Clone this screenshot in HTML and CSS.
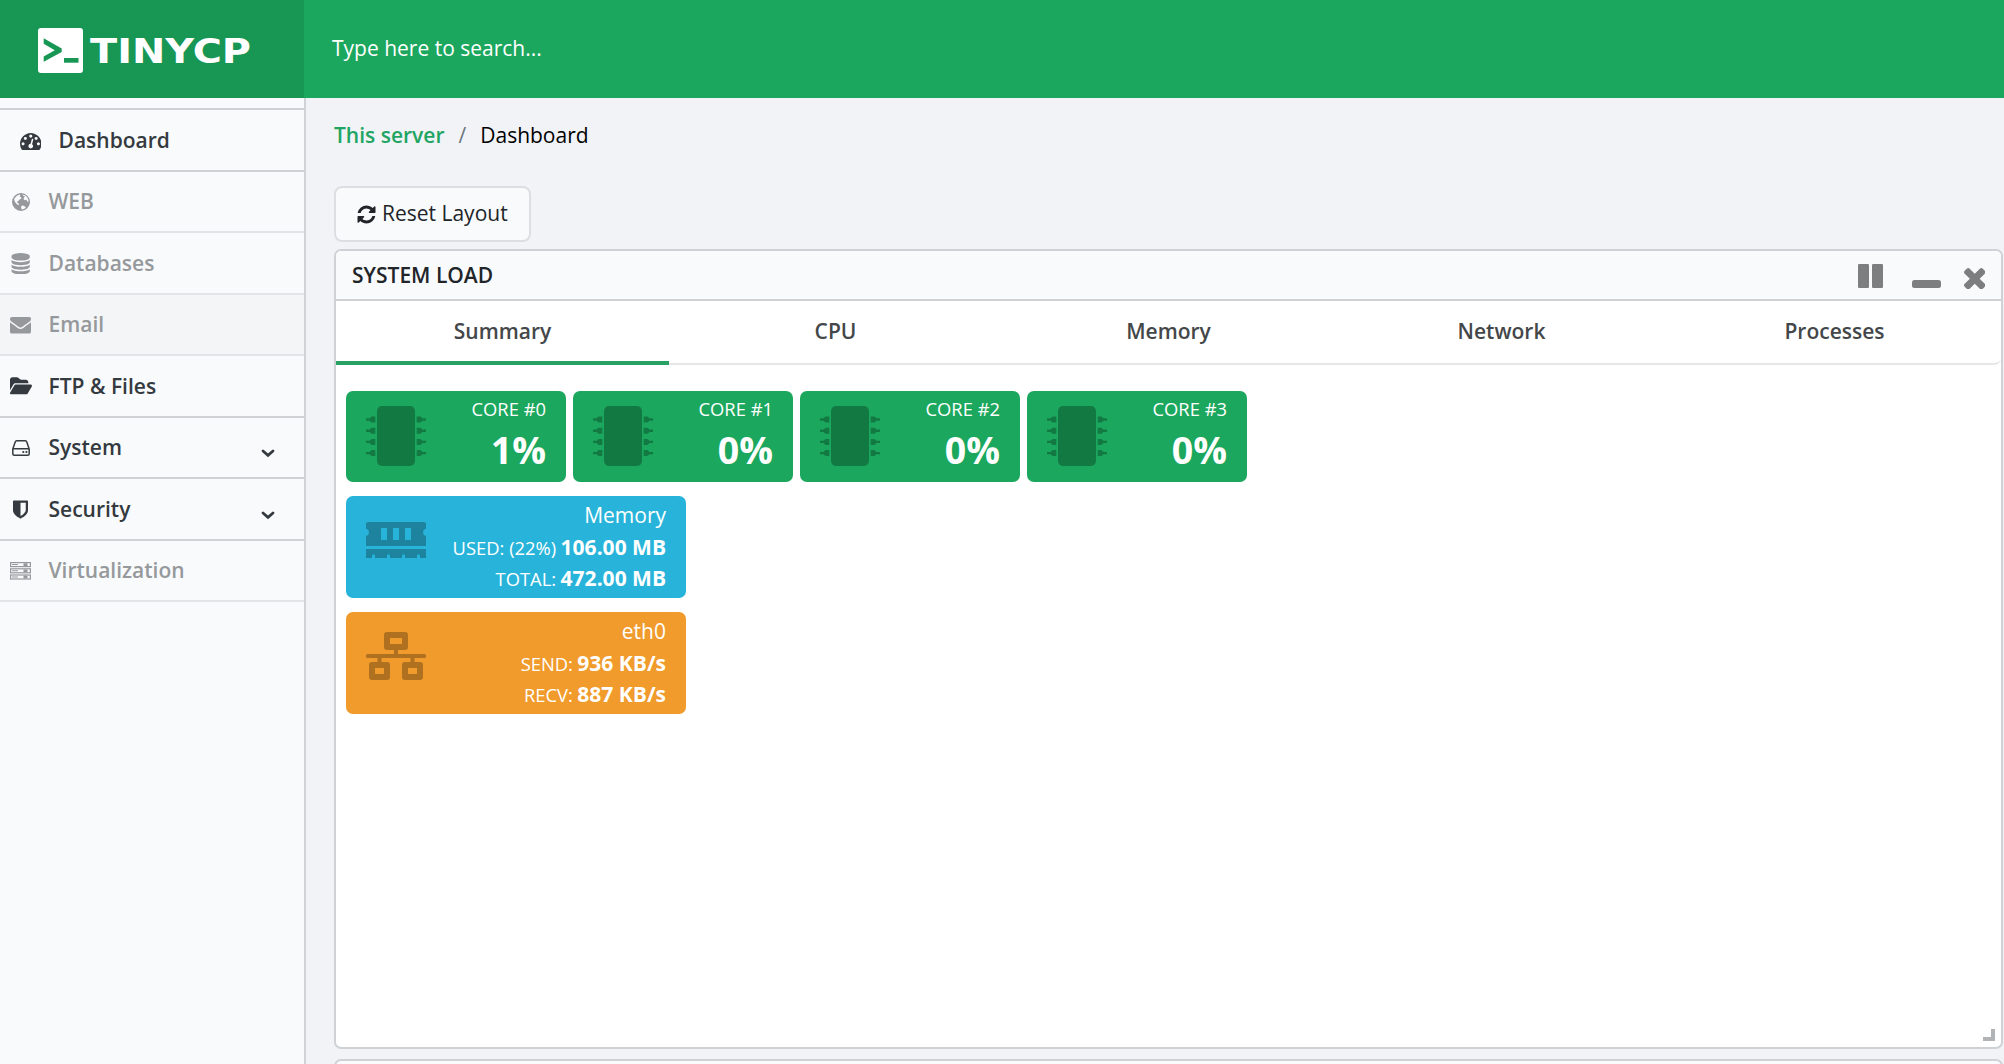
FILE: index.html
```html
<!DOCTYPE html>
<html lang="en">
<head>
<meta charset="utf-8">
<title>TinyCP - Dashboard</title>
<link rel="stylesheet" href="styles.css">
</head>
<body>
<svg class="defs" width="0" height="0" aria-hidden="true">
  <symbol id="chip" viewBox="0 0 60 60">
    <rect x="11" width="38" height="60" rx="5"/>
    <g id="pins-left">
      <path id="pin" d="M9.300 10.500v6H5.500L3.500 14.700H0v-2.400h3.500L5.500 10.500z"/>
      <use href="#pin" y="11.200"/><use href="#pin" y="22.400"/><use href="#pin" y="33.600"/>
    </g>
    <use href="#pins-left" transform="matrix(-1 0 0 1 60 0)"/>
  </symbol>
</svg>

<header class="topbar">
  <div class="brand">
    <svg width="214" height="46" viewBox="0 0 214 46">
      <rect width="45" height="45" rx="3" fill="#fff"/>
      <path d="M5.700 10.300L23.700 20.600v3.400L5.700 33.700v-5.200L16.800 22.200 5.700 15.800z" fill="#179654"/>
      <rect x="26" y="30" width="14.500" height="4.700" fill="#179654"/>
      <text class="wordmark" x="52" y="34.600" textLength="161" lengthAdjust="spacingAndGlyphs">TINYCP</text>
    </svg>
  </div>
  <div class="search">Type here to search...</div>
</header>

<div class="layout">
  <nav class="sidebar">
    <a class="item current">
      <span class="icon"><svg width="21.500" height="21.500" viewBox="0 0 1792 1792"><path d="M384 1152q0-53-37.500-90.500t-90.500-37.500-90.500 37.500-37.500 90.500 37.500 90.500 90.500 37.500 90.500-37.500 37.500-90.500zm192-448q0-53-37.500-90.500t-90.500-37.500-90.500 37.500-37.500 90.500 37.500 90.500 90.500 37.500 90.500-37.500 37.500-90.500zm428 481l101-382q6-26-7.500-48.500t-38.500-29.500-48 6.500-30 39.500l-101 382q-60 5-107 43.500t-63 98.500q-20 77 20 146t117 89 146-20 89-117q16-60-6-117t-72-91zm660-33q0-53-37.500-90.500t-90.500-37.500-90.500 37.500-37.500 90.500 37.500 90.500 90.500 37.500 90.500-37.500 37.500-90.500zm-640-640q0-53-37.500-90.500t-90.500-37.500-90.500 37.500-37.500 90.500 37.500 90.500 90.500 37.500 90.500-37.500 37.500-90.500zm448 192q0-53-37.500-90.500t-90.500-37.500-90.500 37.500-37.500 90.500 37.500 90.500 90.500 37.500 90.500-37.500 37.500-90.500zm320 448q0 261-141 483-19 29-54 29h-1402q-35 0-54-29-141-221-141-483 0-182 71-348t191-286 286-191 348-71 348 71 286 191 191 286 71 348z"/></svg></span>
      <span class="label">Dashboard</span>
    </a>
    <a class="item off">
      <span class="icon"><svg width="18" height="18" viewBox="0 0 18 18"><path fill-rule="evenodd" d="M9 0a9 9 0 1 0 0 18A9 9 0 0 0 9 0zM4.600 3L7.400 1.500l1 .8-.8 1.400 1.500.3.300 1.500-1.800.9-1 1.400-1.400.8.3 1.300 1.300.7.200 1.500-1.500-.3-1.700-1.800L2.500 8 2.200 5.700zM10.300 1.400l3 1 1.900 1.800 1.200 2.500-.1 2.500-1-.7-.9-1.700-1.500.4-1.300-1 .3-1.800 1.200-.9-1.600-.6zM9.300 12.900l1.700-.4 2 .9.800 1-1.700 1.500-2.200.7-.8-1.600z"/></svg></span>
      <span class="label">WEB</span>
    </a>
    <a class="item off">
      <span class="icon"><svg width="21.300" height="21.300" viewBox="0 0 1792 1792"><path d="M896 768q237 0 443-43t325-127v170q0 69-103 128t-280 93.500-385 34.500-385-34.500-280-93.500-103-128v-170q119 84 325 127t443 43zm0 768q237 0 443-43t325-127v170q0 69-103 128t-280 93.500-385 34.500-385-34.500-280-93.500-103-128v-170q119 84 325 127t443 43zm0-384q237 0 443-43t325-127v170q0 69-103 128t-280 93.500-385 34.500-385-34.500-280-93.500-103-128v-170q119 84 325 127t443 43zm0-1152q208 0 385 34.500t280 93.500 103 128v128q0 69-103 128t-280 93.500-385 34.500-385-34.500-280-93.500-103-128v-128q0-69 103-128t280-93.500 385-34.500z"/></svg></span>
      <span class="label">Databases</span>
    </a>
    <a class="item off hovered">
      <span class="icon"><svg width="21" height="21" viewBox="0 0 1792 1792"><path d="M1792 710v794q0 66-47 113t-113 47h-1472q-66 0-113-47t-47-113v-794q44 49 101 87 362 246 497 345 57 42 92.500 65.500t94.500 48 110 24.500h2q51 0 110-24.500t94.500-48 92.500-65.500q170-123 498-345 57-39 100-87zm0-294q0 79-49 151t-122 123q-376 261-468 325-10 7-42.500 31t-54 38.500-52 32.500-57.500 27-50 9h-2q-23 0-50-9t-57.500-27-52-32.500-54-38.500-42.500-31q-91-64-262-182.500t-205-142.500q-62-42-117-115.500t-55-136.500q0-78 41.500-130t118.500-52h1472q65 0 112.500 47t47.500 113z"/></svg></span>
      <span class="label">Email</span>
    </a>
    <a class="item">
      <span class="icon"><svg width="22" height="19.600" viewBox="0 0 576 512"><path d="M88.700 223.800L0 375.800V96C0 60.700 28.700 32 64 32H181.500c17 0 33.300 6.700 45.300 18.700l26.500 26.500c12 12 28.300 18.700 45.300 18.700H416c35.300 0 64 28.700 64 64v32H144c-22.800 0-43.800 12.100-55.300 31.800zm27.600 16.100C122.100 230 132.600 224 144 224H544c11.500 0 22 6.100 27.700 16.100s5.700 22.200-.1 32.100l-112 192C453.900 474 443.400 480 432 480H32c-11.500 0-22-6.100-27.700-16.100s-5.700-22.200 .1-32.100l112-192z"/></svg></span>
      <span class="label">FTP &amp; Files</span>
    </a>
    <a class="item">
      <span class="icon"><svg width="18" height="16" viewBox="0 0 18 16"><path d="M.8 9L3.200 2Q3.600.8 4.700.8h8.600q1.100 0 1.500 1.200L17.200 9v4.700q0 1.500-1.500 1.500H2.300Q.8 15.200.8 13.700zM1 8.800h16" fill="none" stroke="currentColor" stroke-width="1.500"/><circle cx="11.300" cy="12" r="1.100"/><circle cx="14.400" cy="12" r="1.100"/></svg></span>
      <span class="label">System</span>
      <svg class="caret" width="14" height="9" viewBox="0 0 14 9"><path d="M2 2l5 4.300L12 2" fill="none" stroke="currentColor" stroke-width="2.800" stroke-linecap="round"/></svg>
    </a>
    <a class="item">
      <span class="icon"><svg width="21" height="21" viewBox="0 0 1792 1792"><path d="M1344 960v-640h-448v1137q119-63 213-137 235-184 235-360zm192-768v768q0 86-33.500 170.500t-83 150-118 127.500-126.500 103-121 77.500-89.500 49.500-42.500 20q-12 6-26 6t-26-6q-16-7-42.500-20t-89.500-49.500-121-77.500-126.500-103-118-127.500-83-150-33.500-170.500v-768q0-26 19-45t45-19h1152q26 0 45 19t19 45z"/></svg></span>
      <span class="label">Security</span>
      <svg class="caret" width="14" height="9" viewBox="0 0 14 9"><path d="M2 2l5 4.300L12 2" fill="none" stroke="currentColor" stroke-width="2.800" stroke-linecap="round"/></svg>
    </a>
    <a class="item off">
      <span class="icon"><svg width="21" height="18" viewBox="0 0 21 18"><g id="unit"><rect x=".6" y=".6" width="19.800" height="4" fill="none" stroke="currentColor" stroke-width="1.200"/><path d="M2 2.100h6v1H2zM13.500 1.200h4v2.800h-4z"/></g><use href="#unit" y="6.200"/><use href="#unit" y="12.400"/></svg></span>
      <span class="label">Virtualization</span>
    </a>
  </nav>

  <main class="content">
    <div class="breadcrumb"><a>This server</a><i>/</i><span>Dashboard</span></div>
    <button class="reset"><svg width="21" height="21" viewBox="0 0 1792 1792"><path d="M1639 1056q0 5-1 7-64 268-268 434.500t-478 166.500q-146 0-282.500-55t-243.500-157l-129 129q-19 19-45 19t-45-19-19-45v-448q0-26 19-45t45-19h448q26 0 45 19t19 45-19 45l-137 137q71 66 161 102t187 36q134 0 250-65t186-179q11-17 53-117 8-23 30-23h192q13 0 22.500 9.500t9.500 22.500zm25-800v448q0 26-19 45t-45 19h-448q-26 0-45-19t-19-45 19-45l138-138q-148-137-349-137-134 0-250 65t-186 179q-11 17-53 117-8 23-30 23h-199q-13 0-22.500-9.500t-9.500-22.500v-7q65-268 270-434.500t480-166.500q146 0 284 55.500t245 156.500l130-129q19-19 45-19t45 19 19 45z"/></svg>Reset Layout</button>

    <section class="panel">
      <div class="panel-head">
        <h2>SYSTEM LOAD</h2>
        <div class="tools">
          <svg width="25" height="24" viewBox="0 0 25 24"><rect width="11" height="24" rx="1.200"/><rect x="14" width="11" height="24" rx="1.200"/></svg>
          <svg width="29" height="8" viewBox="0 0 29 8"><rect width="29" height="8" rx="2.500"/></svg>
          <svg width="21.500" height="21.500" viewBox="302 366 1188 1188"><path d="M1490 1322q0 40-28 68l-136 136q-28 28-68 28t-68-28l-294-294-294 294q-28 28-68 28t-68-28l-136-136q-28-28-28-68t28-68l294-294-294-294q-28-28-28-68t28-68l136-136q28-28 68-28t68 28l294 294 294-294q28-28 68-28t68 28l136 136q28 28 28 68t-28 68l-294 294 294 294q28 28 28 68z"/></svg>
        </div>
      </div>
      <div class="tabs">
        <a class="active">Summary</a><a>CPU</a><a>Memory</a><a>Network</a><a>Processes</a>
      </div>
      <div class="cards">
        <div class="row">
          <div class="card core"><svg width="60" height="60"><use href="#chip"/></svg><div class="info"><small>CORE #0</small><strong>1%</strong></div></div>
          <div class="card core"><svg width="60" height="60"><use href="#chip"/></svg><div class="info"><small>CORE #1</small><strong>0%</strong></div></div>
          <div class="card core"><svg width="60" height="60"><use href="#chip"/></svg><div class="info"><small>CORE #2</small><strong>0%</strong></div></div>
          <div class="card core"><svg width="60" height="60"><use href="#chip"/></svg><div class="info"><small>CORE #3</small><strong>0%</strong></div></div>
        </div>
        <div class="card wide memory">
          <svg width="60" height="36" viewBox="0 0 60 36"><path fill-rule="evenodd" d="M2 0h56q2 0 2 2v4.500q-3 1.200-3 3.800t3 3.800V24H0v-9.900q3-1.200 3-3.800T0 6.500V2Q0 0 2 0zM15 6v12h6V6zM27 6v12h6V6zM39 6v12h6V6zM0 27h60v9h-6v-2.300a1.500 1.500 0 0 0-3 0V36H39v-2.300a1.500 1.500 0 0 0-3 0V36H24v-2.300a1.500 1.500 0 0 0-3 0V36H9v-2.300a1.500 1.500 0 0 0-3 0V36H0z"/></svg>
          <div class="info"><div>Memory</div><div><small>USED: (22%)</small> <b>106.00 MB</b></div><div><small>TOTAL:</small> <b>472.00 MB</b></div></div>
        </div>
        <div class="card wide network">
          <svg width="60" height="48" viewBox="0 0 60 48"><path fill-rule="evenodd" d="M21 0h18q3 0 3 3v12q0 3-3 3h-7v4h26.500q1.500 0 1.500 1.500v1q0 1.500-1.500 1.500H48.500v4H54q3 0 3 3v12q0 3-3 3H39q-3 0-3-3V33q0-3 3-3h5.500v-4h-29v4H21q3 0 3 3v12q0 3-3 3H6q-3 0-3-3V33q0-3 3-3h5.500v-4h-10Q0 26 0 24.500v-1Q0 22 1.500 22H28v-4h-7q-3 0-3-3V3q0-3 3-3zM24 6v6h12V6zM9 36v6h9v-6zM42 36v6h9v-6z"/></svg>
          <div class="info"><div>eth0</div><div><small>SEND:</small> <b>936 KB/s</b></div><div><small>RECV:</small> <b>887 KB/s</b></div></div>
        </div>
      </div>
      <span class="grip"></span>
    </section>
    <section class="panel next"></section>
  </main>
</div>
</body>
</html>
```
FILE: styles.css
```css
* { box-sizing: border-box; }

body {
  margin: 0;
  height: 1064px;
  overflow: hidden;
  display: flex;
  flex-direction: column;
  font: 21px/1.5 "Open Sans", "Noto Sans", sans-serif;
  color: #212529;
  background: #f1f3f7;
}

svg { display: block; flex: none; fill: currentColor; }
.defs { position: absolute; }

/* Top bar */
.topbar { flex: none; display: flex; height: 98px; background: #1ba75d; color: #fff; }
.brand { width: 304px; padding: 28px 0 0 38px; background: #179654; }
.wordmark { font: 700 34px "DejaVu Sans", sans-serif; fill: #fff; }
.search { padding: 33px 0 0 28px; }

.layout { flex: 1; min-height: 0; display: flex; }

/* Sidebar */
.sidebar {
  flex: none;
  width: 306px;
  padding-top: 10px;
  background: #f9fafc;
  border-right: 2px solid #cfd2d6;
}
.item {
  display: flex;
  align-items: center;
  height: 61.5px;
  padding-left: 8px;
  border-bottom: 2px solid #cfd2d5;
  font-weight: 600;
  color: #343a3f;
}
.item.current { height: 63.5px; padding-left: 18px; border-top: 2px solid #cfd2d5; }
.item.off { color: #96999b; border-bottom-color: #e2e5e8; }
.item.hovered { background: #f4f5f7; }
.icon { display: flex; justify-content: center; width: 25px; margin-right: 15.5px; padding-top: 1px; }
.label { padding-top: 1.5px; }
.caret { margin: 13px 29px 0 auto; }

/* Content */
.content {
  flex: 1;
  min-width: 0;
  display: flex;
  flex-direction: column;
  align-items: flex-start;
  padding: 22px 1px 0 28px;
}
.breadcrumb { display: flex; gap: 14px; color: #000; }
.breadcrumb a { font-weight: 600; color: #22a562; }
.breadcrumb i { font-style: normal; color: #6c757d; }
.reset {
  flex: none;
  display: flex;
  align-items: center;
  gap: 5px;
  height: 56px;
  margin-top: 34.500px;
  padding: 0 21px 0 20px;
  border: 2px solid #dcdee2;
  border-radius: 8px;
  background: #f9fafc;
  font: inherit;
  color: #212529;
}

/* Panels */
.panel {
  position: relative;
  flex: none;
  display: flex;
  flex-direction: column;
  width: 100%;
  height: 800px;
  margin-top: 7px;
  border: 2px solid #cfd2d5;
  border-radius: 7px;
  background: #fff;
}
.panel.next { margin-top: 10px; height: 60px; background: #f9fafc; }
.panel-head {
  display: flex;
  justify-content: space-between;
  height: 50px;
  padding: 8px 16px 0 16px;
  border-bottom: 2px solid #cfd2d5;
  border-radius: 5px 5px 0 0;
  background: #f9fafc;
}
.panel-head h2 { margin: 1px 0 0; font-size: 21px; font-weight: 600; }
.tools { display: flex; align-items: flex-end; height: 29px; color: #7c7e80; }
.tools svg:nth-child(2) { margin: 0 23px 0 29px; }
.tools svg:nth-child(3) { margin-bottom: -1px; }

.tabs {
  display: grid;
  grid-template-columns: repeat(5, 1fr);
  height: 64px;
  border-bottom: 2px solid #e6e7e9;
  border-radius: 0 0 7px 0;
}
.tabs a {
  height: 64px;
  padding-top: 15px;
  text-align: center;
  font-weight: 600;
  color: #444749;
}
.tabs .active { border-bottom: 4px solid #28a263; }

/* Cards */
.cards { display: flex; flex-direction: column; gap: 14.300px; padding: 26px 10px; }
.row { display: flex; gap: 7px; }
.card {
  display: flex;
  justify-content: space-between;
  padding: 3.500px 20px;
  border-radius: 7px;
  color: #fff;
}
.card > svg { fill: rgba(0, 0, 0, .27); }
.card small { font-size: 18.375px; }
.info { text-align: right; white-space: nowrap; }
.core { width: 220px; height: 90.700px; background: #1ba75d; }
.core > svg { margin-top: 11.500px; }
.core small, .core strong { display: block; }
.core strong { font-size: 37.500px; line-height: 1.5; }
.wide { width: 340px; height: 101.700px; }
.wide .info { padding-top: 1px; }
.wide small { margin-right: -1px; }
.memory { background: #28b4da; }
.memory > svg { margin-top: 22.500px; }
.network { background: #f09b2b; }
.network > svg { margin-top: 16.500px; }

.grip {
  position: absolute;
  right: 6px;
  bottom: 6px;
  width: 12px;
  height: 12px;
  border: solid #b1b3b5;
  border-width: 0 4px 4px 0;
}
```
